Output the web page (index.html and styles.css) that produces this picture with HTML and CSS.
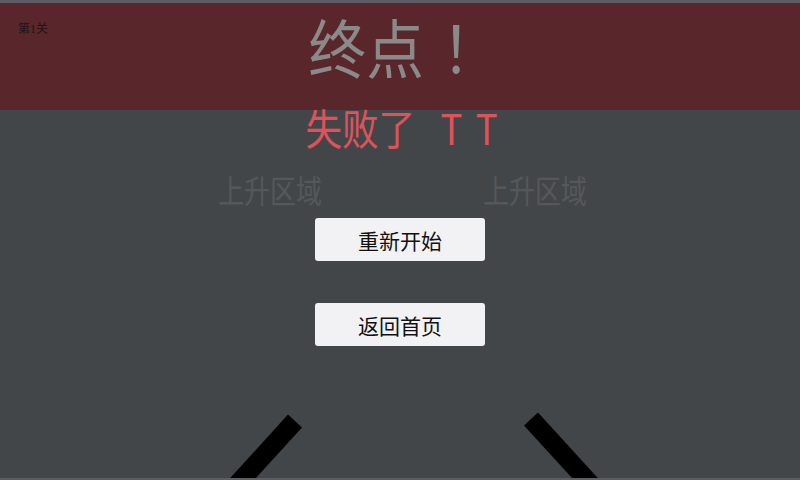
FILE: index.html
```html
<!DOCTYPE html>
<html lang="zh-CN">
<head>
    <meta charset="UTF-8">
    <meta name="viewport" content="width=device-width, initial-scale=1.0">
    <title>终点</title>
    <link rel="stylesheet" href="styles.css">
</head>
<body>
    <div class="screen">
        <div class="banner">
            <span class="level">第1关</span>
            <h1 class="title"><span class="squeeze">终点<span class="bang">！</span></span></h1>
            <span></span>
        </div>

        <p class="fail"><span class="squeeze">失败了<span class="tt">T T</span></span></p>

        <div class="zones">
            <span class="zone">上升区域</span>
            <span class="zone">上升区域</span>
        </div>

        <div class="menu">
            <button class="menu-btn">重新开始</button>
            <button class="menu-btn">返回首页</button>
        </div>

        <!-- 游戏画布上的两根挡板 -->
        <svg class="bars" width="800" height="480" viewBox="0 0 800 480">
            <line x1="295" y1="421" x2="223" y2="500" stroke="#000" stroke-width="19"/>
            <line x1="531" y1="419" x2="605" y2="500" stroke="#000" stroke-width="19"/>
        </svg>
    </div>
</body>
</html>
```

FILE: styles.css
```css
body {
    margin: 0;
    background: #434649;
    font-family: "Noto Sans CJK SC", sans-serif;
}

.screen {
    position: relative;
    width: 800px;
    height: 480px;
    overflow: hidden;
    background: #434649;
    box-sizing: border-box;
    border-bottom: 2px solid #5b5d60;
}

/* 画布文字是横向压缩过的 */
.squeeze {
    display: inline-block;
    white-space: nowrap;
}

.banner {
    display: grid;
    grid-template-columns: 1fr auto 1fr;
    height: 107px;
    border-top: 3px solid #5b5d60;
    background: #58262b;
}

.level {
    padding: 16px 0 0 18px;
    font-family: "Liberation Serif", "Noto Sans CJK SC", serif;
    font-size: 12px;
    color: #1e1416;
}

.title {
    margin: 0;
    padding: 10px 10px 0 0;
    font-size: 64px;
    font-weight: normal;
    line-height: 64px;
    color: #8b8a8a;
    white-space: nowrap;
}

.title .squeeze {
    transform: scaleX(0.9);
}

.bang {
    padding-left: 20px;
    margin-right: -20px;
}

.fail {
    margin: -7px 0 0;
    padding-left: 6px;
    text-align: center;
    font-size: 42px;
    line-height: 48px;
    color: #e0525a;
}

.fail .squeeze {
    transform: scaleX(0.87);
}

.tt {
    margin-left: 29px;
    letter-spacing: 3px;
}

.zones {
    display: flex;
    justify-content: center;
    gap: 137px;
    margin-top: 20px;
    padding-left: 5px;
}

.zone {
    display: inline-block;
    font-size: 32px;
    line-height: 36px;
    color: #55585b;
    transform: scaleX(0.81);
}

.menu {
    display: flex;
    flex-direction: column;
    align-items: center;
    gap: 42px;
    margin-top: 11px;
}

.menu-btn {
    width: 170px;
    height: 43px;
    border: none;
    border-radius: 3px;
    background: #f2f2f4;
    font-family: "Noto Sans CJK SC", sans-serif;
    font-size: 21px;
    color: #111;
    padding: 0;
}

.bars {
    position: absolute;
    left: 0;
    top: 0;
    pointer-events: none;
}
```
